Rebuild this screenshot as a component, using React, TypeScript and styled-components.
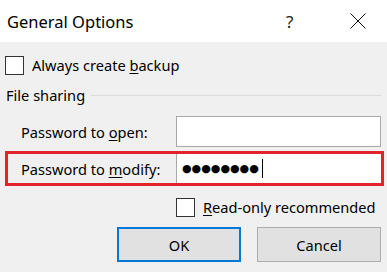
import React from "react";
import styled, { createGlobalStyle } from "styled-components";

const Global = createGlobalStyle`
  html, body { margin: 0; padding: 0; }
  body { background: #f0f0f0; font-family: "Noto Sans", "Open Sans", sans-serif; color: #000; }
`;

const Dialog = styled.div`
  width: 387px;
  height: 272px;
  display: flex;
  flex-direction: column;
  background: #f0f0f0;
  overflow: hidden;
`;

const TitleBar = styled.div`
  height: 42px;
  background: #fff;
  display: flex;
  align-items: center;
  padding-left: 7px;
  box-sizing: border-box;
  flex: none;
`;

const Title = styled.div`
  font-size: 16.5px;
  flex: 1;
`;

const Help = styled.div`
  font-size: 17px;
  color: #222;
  width: 20px;
  margin-right: 44px;
`;

const CloseBtn = styled.div`
  width: 16px;
  height: 16px;
  margin-right: 21px;
  display: flex;
`;

const Body = styled.div`
  display: flex;
  flex-direction: column;
  padding: 13px 3px 0 5px;
`;

const CheckRow = styled.label<{ $indent?: number; $top?: number }>`
  display: flex;
  align-items: center;
  gap: 8px;
  font-size: 14.6px;
  height: 20px;
  margin-left: ${(p) => p.$indent ?? 0}px;
  margin-top: ${(p) => p.$top ?? 0}px;
`;

const Box = styled.span`
  width: 17px;
  height: 17px;
  border: 1px solid #333;
  background: #fff;
  flex: none;
`;

const GroupHeader = styled.div`
  display: flex;
  align-items: center;
  gap: 6px;
  margin-top: 10px;
  height: 20px;
  font-size: 14.6px;
  margin-left: 1px;
  margin-bottom: 8px;
`;

const GroupLine = styled.div`
  flex: 1;
  height: 1px;
  background: #dcdcdc;
  margin-right: 3px;
`;

const FieldRow = styled.div<{ $highlight?: boolean; $height: number; $top?: number }>`
  display: grid;
  grid-template-columns: 168px 205px;
  align-items: stretch;
  box-sizing: border-box;
  border: 3px solid ${(p) => (p.$highlight ? "#e1232b" : "transparent")};
  width: 379px;
  height: ${(p) => p.$height}px;
  margin-top: ${(p) => p.$top ?? 0}px;
`;

const Label = styled.div`
  display: flex;
  align-items: center;
  padding-left: 13px;
  font-size: 14.6px;
`;

const Input = styled.div<{ $highlight?: boolean }>`
  background: #fff;
  box-sizing: border-box;
  border: 1px solid #a8a8a8;
  border-top-width: ${(p) => (p.$highlight ? 0 : 1)}px;
  border-right-width: ${(p) => (p.$highlight ? 0 : 1)}px;
  border-bottom-width: ${(p) => (p.$highlight ? 0 : 1)}px;
  display: flex;
  align-items: center;
  padding-left: 5px;
`;

const Dots = styled.span`
  font-family: "DejaVu Sans", sans-serif;
  font-size: 11px;
  letter-spacing: 0px;
  line-height: 1;
`;

const Caret = styled.span`
  width: 1px;
  height: 19px;
  background: #000;
  margin-left: 3px;
`;

const Buttons = styled.div`
  display: flex;
  justify-content: flex-end;
  gap: 16px;
  margin-top: 10px;
  padding-right: 3px;
`;

const Button = styled.div<{ $default?: boolean }>`
  width: 124px;
  height: 35px;
  box-sizing: border-box;
  background: #e1e1e1;
  border: ${(p) => (p.$default ? "2px solid #0078d7" : "1px solid #adadad")};
  display: flex;
  align-items: center;
  justify-content: center;
  font-size: 14.6px;
`;

const U = styled.span`
  text-decoration: underline;
  text-underline-offset: 2px;
  text-decoration-thickness: 1px;
`;

export default function App() {
  return (
    <>
      <Global />
      <Dialog>
        <TitleBar>
          <Title>General Options</Title>
          <Help>?</Help>
          <CloseBtn>
            <svg width="16" height="16" viewBox="0 0 16 16">
              <path d="M0.5 0.5 L15.5 15.5 M15.5 0.5 L0.5 15.5" stroke="#111" strokeWidth="1" fill="none" />
            </svg>
          </CloseBtn>
        </TitleBar>
        <Body>
          <CheckRow>
            <Box />
            <span>
              Always create <U>b</U>ackup
            </span>
          </CheckRow>
          <GroupHeader>
            <span>File sharing</span>
            <GroupLine />
          </GroupHeader>
          <FieldRow $height={37}>
            <Label>
              Password to&nbsp;<U>o</U>pen:
            </Label>
            <Input />
          </FieldRow>
          <FieldRow $highlight $height={35} $top={1}>
            <Label>
              Password to&nbsp;<U>m</U>odify:
            </Label>
            <Input $highlight>
              <Dots>●●●●●●●●</Dots>
              <Caret />
            </Input>
          </FieldRow>
          <CheckRow $indent={171} $top={11}>
            <Box />
            <span>
              <U>R</U>ead-only recommended
            </span>
          </CheckRow>
          <Buttons>
            <Button $default>OK</Button>
            <Button>Cancel</Button>
          </Buttons>
        </Body>
      </Dialog>
    </>
  );
}
